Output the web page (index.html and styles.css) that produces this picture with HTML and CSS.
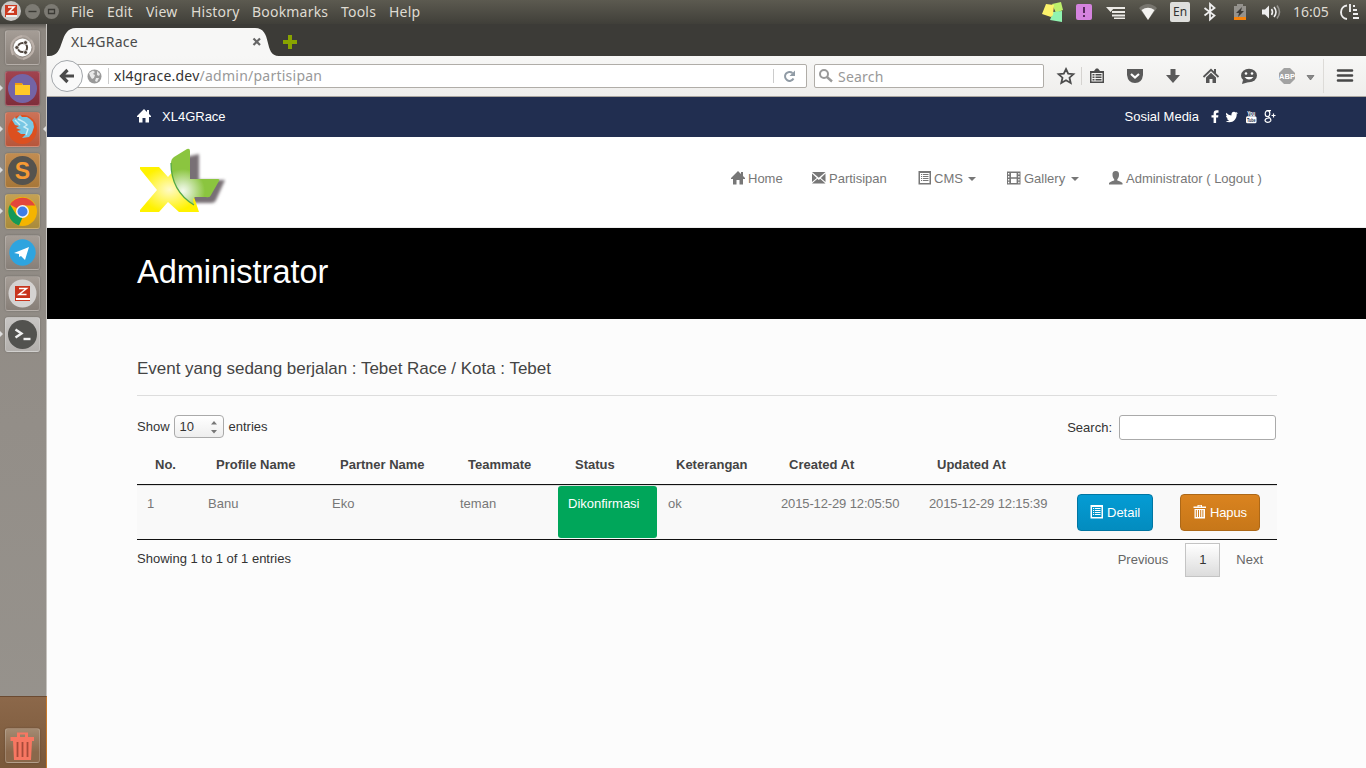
FILE: index.html
```html
<!DOCTYPE html>
<html lang="id">
<head>
<meta charset="utf-8">
<title>XL4GRace</title>
<link rel="stylesheet" href="styles.css">
</head>
<body>
<svg class="defs" aria-hidden="true">
  <symbol id="home" viewBox="0 0 14 14"><path d="M7 0 0 7v1h2v5.500h3.500V9h3v4.500H12V8h2V7l-2-2V1h-2v2z"/></symbol>
  <symbol id="mail" viewBox="0 0 14 14"><path d="M0 1h13.500L6.800 6.800zM0 2.500 4.800 7 0 11zM13.500 2.500V11L8.800 7zM0 12.500 5.400 7.700l1.400 1.200 1.400-1.200 5.300 4.800z"/></symbol>
  <symbol id="list" viewBox="0 0 14 14"><path fill-rule="evenodd" d="M.5 0h12.500v13.500H.5zM2 2v10h9.500V2zM3 3h1.200v1H3zm2 0h5.500v1H5zM3 5h1.200v1H3zm2 0h5.500v1H5zM3 7h1.200v1H3zm2 0h5.500v1H5zM3 9h1.200v1H3zm2 0h5.500v1H5z"/></symbol>
  <symbol id="film" viewBox="0 0 14 14"><path fill-rule="evenodd" d="M0 .5h13.500v13H0zM1 2v1.500h1.300V2zm0 3v1.500h1.300V5zm0 3v1.500h1.300V8zm0 2.800v1.400h1.300v-1.400zM4 2v4.300h5.600V2zm0 5.700V12h5.600V7.700zM11.200 2v1.500h1.300V2zm0 3v1.500h1.300V5zm0 3v1.500h1.300V8zm0 2.800v1.400h1.300v-1.400z"/></symbol>
  <symbol id="user" viewBox="0 0 14 14"><path d="M6.800 0C4.300 0 3.300 1.500 3.500 4c.1 2 .8 3.500 1.700 4.300v1.200C3 10.300.3 11.200 0 12v1.500h13.500V12c-.3-.8-3-1.700-5.200-2.500V8.300C9.200 7.500 9.900 6 10 4c.2-2.600-.8-4-3.200-4z"/></symbol>
  <symbol id="trash" viewBox="0 0 14 14"><path fill-rule="evenodd" d="M4.500 0h4.500v1.500h4V3H.5V1.500h4zM5.500 .800v.7H8V.8zM1.500 4h10.500v9.500H1.500zM2.800 5v7h1V5zm2.200 0v7h1V5zm2.200 0v7h1V5zm2.200 0v7h1V5z"/></symbol>
</svg>

<header class="menubar">
  <svg class="wm" viewBox="0 0 64 24">
    <circle cx="11" cy="11" r="10" fill="#c9c7c5"/><path d="M5 5h12v12H5z" fill="#cc3a20"/><path d="M6 15h11v2H6z" fill="#eee"/><path d="M8 7h6l-5 5h5" fill="none" stroke="#fff" stroke-width="1.500"/>
    <circle cx="32.500" cy="11.500" r="7.500" fill="#7c7a73"/><path d="M28.500 11.500h8" stroke="#3b3a35" stroke-width="1.400"/>
    <circle cx="51.500" cy="11.500" r="7.500" fill="#7c7a73"/><path d="M48.500 9.500h6v4h-6z" fill="none" stroke="#3b3a35" stroke-width="1.300"/>
  </svg>
  <nav class="menus"><span>File</span><span>Edit</span><span>View</span><span>History</span><span>Bookmarks</span><span>Tools</span><span>Help</span></nav>
  <div class="tray">
    <svg width="252" height="24" viewBox="1040 0 252 24">
      <path d="m1052 4 9-2 2 8-7 3z" fill="#bdf06c"/><path d="m1053 12 9-1 0 11-12-2z" fill="#90f3b0"/><path d="m1046 4 8 1-1 10-2 2-9-3z" fill="#fbf26b"/>
      <rect x="1076" y="4" width="16" height="16" rx="2" fill="#d583df"/><path d="M1084 7v6m0 2v2" stroke="#4a2250" stroke-width="1.800"/>
      <path d="M1106 7h9l-4.500 5zM1111 7h14v2h-14zm1 4h13v2h-13zm0 3.500h13v2h-13zm2 3h11v1.500h-11z" fill="#eceae6"/>
      <path d="M1139 8q9-8 18 0l-9 12z" fill="#77756e"/><path d="M1141.500 10q6.500-4.500 13 0l-6.500 10z" fill="#f4f3f0"/>
      <rect x="1170" y="2" width="20" height="20" rx="2" fill="#dfdfdd"/>
      <path d="m1204.500 8 10 7.500-4.500 4V4l4.500 4-10 7.500" fill="none" stroke="#eee" stroke-width="1.800"/>
      <path d="M1237 4h6v2h3v14h-12V6h3z" fill="#94928d"/><path d="M1234 17h12v3h-12z" fill="#f6830c"/><path d="m1242 7-6 6h3l-1 4 6-6h-3z" fill="#3c3b37"/>
      <path d="M1262 9.500h3l4-4v13l-4-4h-3z" fill="#eee"/><path d="M1271.500 9q2 3 0 6m2.500-8q4 5 0 10" fill="none" stroke="#eee" stroke-width="1.600"/><path d="M1277 5.500q5 6.500 0 13" fill="none" stroke="#94928d" stroke-width="1.600"/>
    </svg>
    <span class="lang">En</span>
    <span class="clock">16:05</span>
    <svg width="20" height="24" viewBox="1340 0 20 24"><path d="M1347 5.500a6.800 6.800 0 0 0 0 13.500M1350 4v8" fill="none" stroke="#eee" stroke-width="1.900"/><path d="M1353 6h2m-2 4h4m-4 4h5m-5 4h6" stroke="#eee" stroke-width="1.900"/></svg>
  </div>
</header>

<div class="desktop">
  <aside class="dock">
    <div class="tile gray"><svg viewBox="0 0 35 35"><g fill="none" stroke="#bdb2ab" stroke-width="2"><path d="M8 25Q2 10 17 6"/><path d="M26 10Q34 23 18 29"/><path d="M10 9q12-9 19 8" opacity=".6"/><path d="M25 26Q14 34 6 18" opacity=".6"/></g><circle cx="17.500" cy="17.500" r="9" fill="#fff"/><circle cx="17.500" cy="17.500" r="4.600" fill="none" stroke="#50463f" stroke-width="2"/><g fill="#50463f" stroke="#fff" stroke-width=".7"><circle cx="11.800" cy="17.500" r="2"/><circle cx="20.500" cy="12.600" r="2"/><circle cx="20.500" cy="22.400" r="2"/></g></svg></div>
    <div class="tile maroon run"><svg viewBox="0 0 35 35"><circle cx="17.500" cy="17.500" r="14.500" fill="#7464a5"/><path d="M10 12h7l1 2h7v10H10z" fill="#ffc928"/><path d="M10 12h7v2h-7z" fill="#f09b12"/></svg></div>
    <div class="tile orange run active"><svg viewBox="0 0 35 35"><circle cx="17.500" cy="17.500" r="14.500" fill="#dc5020"/><path d="m7 8 3-3 1 2 4-4 2 2 5 0 3 2 3 3 1 5-2 6-3 4-7 1 4-4-5 0-4-3 4-1-5-2 3-2-4-1z" fill="#78c7e4"/><path d="m13 7 6 3 3 3-3 2 4 2-2 6M10 8l5 5" stroke="#c9edf7" stroke-width="1.400" fill="none"/></svg></div>
    <div class="tile amber run"><svg viewBox="0 0 35 35"><circle cx="17.500" cy="17.500" r="14.500" fill="#55534e"/><text x="17.500" y="25.500" class="sub">S</text></svg></div>
    <div class="tile gold run"><svg viewBox="0 0 35 35"><circle cx="17.500" cy="17.500" r="14.500" fill="#f4b400"/><path d="M5 10.500A14.500 14.500 0 0 1 30.200 11.500H17.500v6z" fill="#e3463c"/><path d="M5 10.500 11.500 21l6 2.500-3.500 8A14.500 14.500 0 0 1 5 10.500z" fill="#159957"/><circle cx="17.500" cy="17.500" r="6.500" fill="#f4f4f4"/><circle cx="17.500" cy="17.500" r="5" fill="#3e7de8"/></svg></div>
    <div class="tile gray"><svg viewBox="0 0 35 35"><circle cx="17.500" cy="17.500" r="13.200" fill="#2ea4df"/><path d="m9 18 15-6-4 13-4-4-2 1v-3z" fill="#fff"/></svg></div>
    <div class="tile gray"><svg viewBox="0 0 35 35"><circle cx="17.500" cy="17.500" r="14" fill="#d4d2d1"/><path d="M10 10h15v15H10z" fill="#c8341d"/><path d="M11 22h14v2H11z" fill="#fff"/><path d="M14 12.500h7.500L14 18.500h7.500" fill="none" stroke="#fff" stroke-width="1.500"/></svg></div>
    <div class="tile light run"><svg viewBox="0 0 35 35"><circle cx="17.500" cy="17.500" r="14.500" fill="#52524f"/><path d="m10.500 12.500 6 4-6 4" fill="none" stroke="#f0f0f0" stroke-width="2.400"/><path d="M18.500 22h7" stroke="#f0f0f0" stroke-width="2.400"/></svg></div>
    <div class="bin"><div class="tile clear"><svg viewBox="0 0 35 35"><path fill-rule="evenodd" d="M12 4.500h11V9h6v4H27l-1 19H9L8 13H5.500V9H12zM15 6.500V9h5V6.500z" fill="#f77762"/><path d="M12.500 14v15m5-15v15m5-15v15" stroke="#a84a39" stroke-width="1.800"/></svg></div></div>
  </aside>

  <main class="window">
    <div class="tabs">
      <div class="tab">
        <svg class="tabshape" viewBox="0 0 230 32" preserveAspectRatio="none"><path d="M0 32C17 32 9 4 27 4H206C224 4 214 32 230 32z" fill="#f7f7f6"/></svg>
        <span>XL4GRace</span>
        <svg width="10" height="10" viewBox="0 0 10 10"><path d="m1.500 1.500 6.500 6.500m0-6.500L1.500 8" stroke="#666" stroke-width="2.200"/></svg>
      </div>
      <svg class="plus" width="14" height="14" viewBox="0 0 14 14"><path d="M7 0v14M0 7h14" stroke="#88a300" stroke-width="4"/></svg>
    </div>
    <div class="toolbar">
      <div class="back"><svg width="16" height="16" viewBox="0 0 16 16"><path d="M15 8H3m5.500-6L2.500 8l6 6" fill="none" stroke="#4a4a4a" stroke-width="3.200"/></svg></div>
      <div class="url">
        <svg width="15" height="15" viewBox="0 0 15 15"><circle cx="7.500" cy="7.500" r="7" fill="#999"/><path d="M2 4l4-2.500 2 1.500-2 2 2 1-1 3-2 1-2-3zM10 2l3 3-1 2-2-1zM9 9l3 0-2 4-2-1z" fill="#e8e8e8"/></svg>
        <span class="addr"><b>xl4grace.dev</b>/admin/partisipan</span>
        <svg class="reload" width="14" height="14" viewBox="0 0 14 14"><path d="M10.500 9.500A4.500 4.500 0 1 1 9.500 4" fill="none" stroke="#909ba5" stroke-width="2"/><path d="M12 1.500V7H6.500z" fill="#909ba5"/></svg>
      </div>
      <div class="find"><svg width="14" height="14" viewBox="0 0 14 14"><circle cx="5" cy="5" r="4" fill="none" stroke="#999" stroke-width="2"/><path d="m8 8 5 4.500" stroke="#999" stroke-width="2.400"/></svg><span>Search</span></div>
      <svg class="tools" width="322" height="40" viewBox="1044 56 322 40">
        <path d="m1066 69 2.200 4.700 5.200.5-3.900 3.500 1.200 5.300-4.700-2.800-4.700 2.800 1.200-5.300-3.900-3.500 5.200-.5z" fill="none" stroke="#4c4c4c" stroke-width="1.800"/>
        <path d="M1081.500 67v18" stroke="#d5d3d0"/><path d="M1323.500 59v34" stroke="#dddbd8"/>
        <path fill-rule="evenodd" d="M1090 71h4l2-2.500h2l2 2.500h4v12h-14zm1.500 2v8.500h11V73zm1 1h2v1.500h-2zm3 0h6v1.500h-6zm-3 2.500h2V78h-2zm3 0h6V78h-6zm-3 2.500h2v1.500h-2zm3 0h6v1.500h-6z" fill="#4c4c4c"/>
        <path d="M1127 69h16v6q-1 8-8 8t-8-8z" fill="#5a5a5a"/><path d="m1131 74 4 3.500 4-3.500" fill="none" stroke="#fff" stroke-width="2.200"/>
        <path d="M1170.500 69h5v6h4.500l-7 8-7-8h4.500z" fill="#5a5a5a"/>
        <path d="m1203.500 77 7.500-7.200 7.500 7.200" fill="none" stroke="#555" stroke-width="1.800"/><path d="m1206 77.500 5-4.700 5 4.700v5.500h-3.500v-4h-3v4h-3.500zM1214 69h2v4h-2z" fill="#555"/>
        <ellipse cx="1249" cy="75.500" rx="8" ry="6.700" fill="#555"/><path d="m1243 80-1 4 7-2z" fill="#555"/><circle cx="1246" cy="73.500" r="1.300" fill="#fff"/><circle cx="1252" cy="73.500" r="1.300" fill="#fff"/><path d="M1244.500 77h9q-4.500 5-9 0z" fill="#fff"/>
        <path d="M1284 68h6l5 5v6l-5 5h-6l-5-5v-6z" fill="#a2a2a2"/><text x="1287" y="79" class="abp">ABP</text>
        <path d="M1307 75.500h7l-3.500 4.500z" fill="#888" stroke="#666" stroke-width=".7"/>
        <path d="M1338 70.500h14m-14 5h14m-14 5h14" stroke="#474747" stroke-width="2.600" stroke-linecap="round"/>
      </svg>
    </div>

    <div class="page">
      <div class="topbar"><svg class="ic"><use href="#home"/></svg><span class="brand">XL4GRace</span><span class="social">Sosial Media</span>
        <svg width="68" height="14" viewBox="0 0 68 14" fill="#fff"><path d="M8.500.3v2.400H7.300q-1.200 0-1.200 1v1.500h2.300l-.3 2.400h-2V13H3.600V7.600H1.500V5.200h2.100V3.400Q3.600.2 6.600.2z"/><path d="M28 3q-.5.800-1.300 1.300C26.800 9 23.500 12.300 19.500 12.300q-2.200 0-3.800-1.100 2.200 0 3.500-1-1.800-.2-2.400-1.800h1.100q-2-.7-2-2.600l1.100.2Q15.300 4.800 16.200 2.800q2.200 2.500 5.200 2.700Q21.200 2.100 24 1.800q1 0 1.800.7l1.600-.6-1 1.500z"/><rect x="36" y="6.300" width="10.500" height="7" rx="1.500"/><text x="41.200" y="5.600" class="yt" textLength="8" lengthAdjust="spacingAndGlyphs">You</text><text x="41.200" y="12" class="yt tube" textLength="8.500" lengthAdjust="spacingAndGlyphs">Tube</text><g fill="none" stroke="#fff" stroke-width="1.200"><ellipse cx="57.500" cy="3.700" rx="2.300" ry="3"/><path d="M57 .7h4M58 6.500q3.500 2 2.700 4.300-1.300 1.900-4 1.400-2.700-1.200-1-3.200 1.300-1 3.500-1M63.500 3.500v4M61.500 5.500h4"/></g></svg>
      </div>
      <div class="mainnav">
        <svg class="logo" width="90" height="68" viewBox="0 0 90 68">
          <defs><radialGradient id="y"><stop offset="0" stop-color="#fffac8"/><stop offset="1" stop-color="#fff200"/></radialGradient><radialGradient id="g" gradientUnits="userSpaceOnUse" cx="46" cy="44" r="22"><stop offset="0" stop-color="#f4faec"/><stop offset=".25" stop-color="#dceec8"/><stop offset="1" stop-color="#8bc53f"/></radialGradient><filter id="s"><feGaussianBlur stdDeviation="1.500"/></filter></defs>
          <path d="M40 12 62 7v26h26l-9 20q-1 3-5 3H56z" fill="#787074" filter="url(#s)"/>
          <path d="M3 20h19l9 10 9-10h7l15 45H42l-11-10-9 10H3v-2l17-20L3 22z" fill="url(#y)"/>
          <path d="M34 16q0-4 3-6L50 2q3-1 3 2v28h28q2 0 1 2l-8 14q-1 3-5 2H58q-3 1-1 8Q34 44 34 16z" fill="url(#g)"/>
          <path d="M34 16Q34 44 57 58" fill="none" stroke="#53a845" stroke-width="1.300"/>
        </svg>
        <nav class="links">
          <a><svg class="ic"><use href="#home"/></svg>Home</a><a><svg class="ic"><use href="#mail"/></svg>Partisipan</a><a><svg class="ic"><use href="#list"/></svg>CMS<i class="caret"></i></a><a><svg class="ic"><use href="#film"/></svg>Gallery<i class="caret"></i></a><a><svg class="ic"><use href="#user"/></svg>Administrator ( Logout )</a>
        </nav>
      </div>
      <div class="hero"><h1>Administrator</h1></div>
      <section class="content">
        <h2>Event yang sedang berjalan : Tebet Race / Kota : Tebet</h2>
        <div class="filters">
          <span class="up">Show</span><span class="select">10<svg width="8" height="14" viewBox="0 0 8 14"><path d="m1 4.500 3-3.500 3 3.500zM1 10l3 3.500L7 10z" fill="#777"/></svg></span><span class="up">entries</span>
          <span class="lbl">Search:</span><input type="text">
        </div>
        <table>
          <colgroup><col class="c1"><col class="c2"><col class="c3"><col class="c4"><col class="c5"><col class="c6"><col class="c7"><col class="c7"><col class="c9"><col class="c10"></colgroup>
          <thead><tr><th>No.</th><th>Profile Name</th><th>Partner Name</th><th>Teammate</th><th class="sth">Status</th><th>Keterangan</th><th>Created At</th><th>Updated At</th><th></th><th></th></tr></thead>
          <tbody><tr><td>1</td><td>Banu</td><td>Eko</td><td>teman</td><td class="st"><div class="ok">Dikonfirmasi</div></td><td>ok</td><td class="date">2015-12-29 12:05:50</td><td class="date">2015-12-29 12:15:39</td><td><span class="btn blue"><svg class="ic"><use href="#list"/></svg>Detail</span></td><td><span class="btn brown"><svg class="ic"><use href="#trash"/></svg>Hapus</span></td></tr></tbody>
        </table>
        <div class="foot"><span class="info">Showing 1 to 1 of 1 entries</span><span class="prev">Previous</span><span class="cur">1</span><span class="next">Next</span></div>
      </section>
    </div>
  </main>
</div>
</body>
</html>
```
FILE: styles.css
```css
* { box-sizing: border-box; }
body { margin: 0; width: 1366px; height: 768px; overflow: hidden; display: flex; flex-direction: column; font-family: "Noto Sans", sans-serif; }
svg { display: block; flex: none; }
.defs { display: none; }
.ic { width: 14px; height: 14px; fill: currentColor; margin-top: -2px; }

.menubar { height: 24px; flex: none; display: flex; align-items: center; background: linear-gradient(#5c5a50, #403f39); color: #dfdbd2; font-size: 14px; line-height: 24px; }
.wm { width: 64px; height: 24px; }
.menus { display: grid; grid-template-columns: 36px 39px 45px 61px 89px 48px 60px; margin-left: 7px; white-space: nowrap; letter-spacing: .2px; }
.tray { margin-left: auto; display: flex; position: relative; padding-right: 6px; }
.lang { position: absolute; left: 130px; top: 2px; width: 20px; height: 20px; line-height: 20px; font-size: 12px; text-align: center; color: #333; }
.clock { width: 48px; padding-left: 1px; }

.desktop { flex: 1; display: flex; min-height: 0; }
.dock { width: 47px; flex: none; display: flex; flex-direction: column; gap: 6px; padding: 6px 0 0 5px; background: linear-gradient(#5f5c57 0, #8d8780 5px, #938e88 400px, #97938d); border-right: 1px solid #c6c3bf; }
.tile { width: 35px; height: 35px; flex: none; position: relative; border-radius: 3px; border: 1px solid #ffffff30; box-shadow: 0 0 2px #0004; }
.tile svg { width: 35px; height: 35px; margin: -1px 0 0 -1px; }
.gray { background: linear-gradient(#a59d96, #877f78); }
.maroon { background: linear-gradient(#a1434f, #7f2d3b); }
.orange { background: linear-gradient(#cc7257, #b7563b); }
.amber { background: linear-gradient(#c18c51, #a77739); }
.gold { background: linear-gradient(#c5a153, #a98b3b); }
.light { background: linear-gradient(#c7c5c3, #b3b0ad); }
.clear { background: linear-gradient(#a38a72, #89684b 70%); }
.run::before { content: ""; position: absolute; left: -6px; top: 13px; border: 3px solid transparent; border-left-color: #ddd; border-right: 0; }
.active::after { content: ""; position: absolute; right: -7px; top: 13px; border: 3px solid transparent; border-right-color: #ddd; border-left: 0; }
.sub { font: 700 23px "Liberation Sans", sans-serif; fill: #f79a34; text-anchor: middle; }
.bin { margin: auto -1px 0 -5px; height: 72px; padding: 31px 0 0 5px; background: linear-gradient(#8c684a, #79583a); border-right: 1px solid #c87a2c; border-top: 1px solid #6b4a31; }

.window { flex: 1; display: flex; flex-direction: column; min-width: 0; }
.tabs { height: 32px; display: flex; background: #3c3b37; }
.tab { width: 230px; height: 32px; margin-left: 2px; position: relative; display: flex; align-items: center; justify-content: space-between; padding: 3px 17px 0 22px; font-size: 14px; color: #4a4a4a; }
.tab span { position: relative; letter-spacing: .25px; }
.tab svg { position: relative; }
.tab .tabshape { position: absolute; left: 0; top: 0; width: 230px; height: 32px; }
.plus { margin: 11px 0 0 4px; }
.toolbar { height: 41px; flex: none; display: flex; align-items: center; background: linear-gradient(#f7f7f6, #efeeec); border-bottom: 1px solid #aaa6a0; padding-left: 4px; }
.back { width: 32px; height: 32px; border-radius: 50%; border: 1px solid #a3a7ab; background: #f9f9f9; display: flex; align-items: center; justify-content: center; position: relative; z-index: 1; }
.url, .find { height: 24px; display: flex; align-items: center; background: #fff; border: 1px solid #b0ada8; border-radius: 2px; font-size: 14px; }
.url { width: 731px; margin-left: -7px; padding-left: 10px; }
.addr { color: #999; margin-left: 6px; border-left: 1px solid #ccc; padding-left: 5px; line-height: 16px; letter-spacing: .24px; }
.addr b { color: #333; font-weight: 400; }
.reload { margin: 0 9px 0 auto; box-sizing: content-box; padding-left: 9px; border-left: 1px solid #ccc; }
.find { width: 230px; margin-left: 7px; padding-left: 4px; gap: 5px; color: #999; letter-spacing: .2px; }
.abp { font: 700 7.5px "Liberation Sans", sans-serif; fill: #fff; text-anchor: middle; }

.page { flex: 1; background: #fcfcfc; font: 13px "Liberation Sans", Arial, sans-serif; color: #333; }
.topbar { height: 40px; padding: 0 88px 1px 90px; background: #212e50; color: #fff; display: flex; align-items: center; }
.brand { margin-left: 11px; }
.social { margin: 0 11px 0 auto; }
.yt { font: 700 6.500px "Liberation Sans", sans-serif; fill: #fff; text-anchor: middle; }
.tube { font-size: 6px; fill: #212e50; }
.mainnav { height: 91px; background: #fff; padding: 10px 0 0 90px; display: flex; border-bottom: 1px solid #eee; }
.links { display: grid; grid-template-columns: 81px 106px 89px 102px 170px; margin: 24px 0 0 504px; height: 14px; color: #777; white-space: nowrap; }
.links a { display: flex; align-items: center; gap: 3px; }
.links a:nth-child(3) { gap: 2px; }
.caret { border: 4px solid transparent; border-top-color: #777; border-bottom: 0; margin-left: 3px; }
.hero { height: 91px; background: #000; padding: 25px 90px; }
h1 { margin: 0; font-weight: 400; font-size: 32.500px; line-height: 39px; color: #fff; }
.content { padding: 0 89px 0 90px; width: 1319px; }
h2 { margin: 0 0 19px; height: 77px; padding-top: 40px; border-bottom: 1px solid #ddd; font-size: 17px; font-weight: 400; line-height: 20px; color: #444; letter-spacing: -.025px; }
.filters { height: 25px; display: flex; align-items: center; }
.up { margin-top: -2px; }
.select { width: 50px; height: 23px; margin: -2px 5px 0 4px; border: 1px solid #aaa; border-radius: 4px; background: linear-gradient(#fff, #eee); display: flex; align-items: center; justify-content: space-between; padding: 0 5px 0 5px; }
.lbl { margin: 0 7px 0 auto; }
.filters input { width: 157px; height: 25px; border: 1px solid #aaa; border-radius: 3px; background: #fff; margin-right: 1px; }
table { width: 1140px; table-layout: fixed; border-spacing: 0; margin-top: 6px; }
.c1 { width: 61px; } .c2 { width: 124px; } .c3 { width: 128px; } .c4 { width: 108px; } .c5 { width: 100px; }
.c6 { width: 113px; } .c7 { width: 148px; } .c9 { width: 103px; } .c10 { width: 107px; }
th { height: 39px; padding: 0 18px 2px; text-align: left; white-space: nowrap; color: #444; border-bottom: 1px solid #111; }
.sth { padding-left: 17px; }
td { height: 55px; padding: 8px 10px 0; vertical-align: top; white-space: nowrap; line-height: 20px; color: #777; background: #f9f9f9; border-top: 1px solid #ddd; border-bottom: 1px solid #111; }
.date { letter-spacing: -.13px; }
.st { padding: 0; }
.ok { height: 52px; width: 99px; padding: 8px 10px; background: #00a65a; border-radius: 3px; color: #fff; }
.btn { display: inline-flex; align-items: center; gap: 3px; height: 37px; padding: 0 12px; border: 1px solid #0076a3; border-radius: 4px; color: #fff; vertical-align: top; }
.blue { background: linear-gradient(#049cd4, #038cbf); }
.brown { width: 80px; background: linear-gradient(#da831f, #c77719); border-color: #ad6817; letter-spacing: -.15px; }
.foot { display: flex; align-items: center; height: 34px; margin-top: 3px; color: #666; }
.info { color: #333; margin: -3px auto 0 0; }
.prev, .next { margin-top: -2px; }
.cur { width: 35px; height: 34px; margin: 0 16px 0 17px; padding-bottom: 1px; border: 1px solid #c4c4c4; background: linear-gradient(#fff, #dcdcdc); color: #333; display: flex; align-items: center; justify-content: center; }
.next { margin-right: 14px; }
```
